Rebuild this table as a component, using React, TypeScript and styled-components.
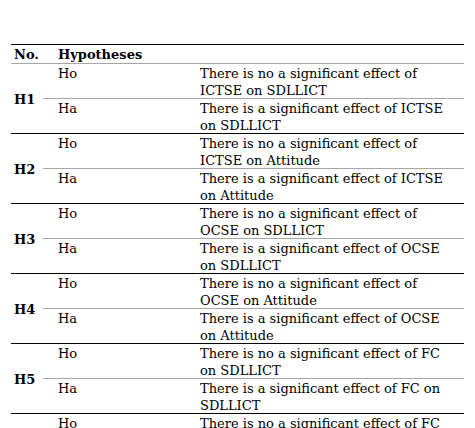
import React from 'react';
import styled, { createGlobalStyle } from 'styled-components';

interface Hypothesis {
  id: string;
  ho: string[];
  ha: string[];
}

const rows: Hypothesis[] = [
  { id: 'H1', ho: ['There is no a significant effect of', 'ICTSE on SDLLICT'], ha: ['There is a significant effect of ICTSE', 'on SDLLICT'] },
  { id: 'H2', ho: ['There is no a significant effect of', 'ICTSE on Attitude'], ha: ['There is a significant effect of ICTSE', 'on Attitude'] },
  { id: 'H3', ho: ['There is no a significant effect of', 'OCSE on SDLLICT'], ha: ['There is a significant effect of OCSE', 'on SDLLICT'] },
  { id: 'H4', ho: ['There is no a significant effect of', 'OCSE on Attitude'], ha: ['There is a significant effect of OCSE', 'on Attitude'] },
  { id: 'H5', ho: ['There is no a significant effect of FC', 'on SDLLICT'], ha: ['There is a significant effect of FC on', 'SDLLICT'] },
  { id: 'H6', ho: ['There is no a significant effect of FC', 'on Attitude'], ha: ['There is a significant effect of FC on', 'Attitude'] },
];

const GlobalStyle = createGlobalStyle`
  body {
    margin: 0;
    background: #ffffff;
    font-family: "DejaVu Serif", "Liberation Serif", serif;
    color: #000000;
  }
`;

const Page = styled.div`
  width: 475px;
  height: 428px;
  overflow: hidden;
  padding: 44px 0 0 11px;
  box-sizing: border-box;
`;

const Table = styled.table`
  width: 453px;
  border-collapse: collapse;
  table-layout: fixed;
  font-size: 13px;
  line-height: 17px;
  border-top: 1px solid #000;
`;

const HeadCell = styled.th<{ $pad: number }>`
  text-align: left;
  font-weight: bold;
  padding: 1px 0 0 ${(p) => p.$pad}px;
  height: 17px;
  box-sizing: border-box;
  border-bottom: 1px solid #a6a6a6;
  vertical-align: top;
`;

const IdCell = styled.td`
  font-weight: bold;
  padding: 1px 0 0 3px;
  vertical-align: middle;
  border-bottom: 1px solid #000;
`;

const Cell = styled.td<{ $pad: number; $last?: boolean }>`
  padding: 1px 0 0 ${(p) => p.$pad}px;
  vertical-align: top;
  white-space: nowrap;
  border-bottom: 1px solid ${(p) => (p.$last ? '#000' : '#a6a6a6')};
`;

// rows are 35px tall in the source; pull the 2-line block up by 1px
const CellText = styled.div`
  height: 33px;
  overflow: visible;
`;

function Lines({ lines }: { lines: string[] }) {
  return (
    <CellText>
      {lines.map((l, i) => (
        <React.Fragment key={i}>
          {i > 0 && <br />}
          {l}
        </React.Fragment>
      ))}
    </CellText>
  );
}

export default function App() {
  return (
    <>
      <GlobalStyle />
      <Page>
        <Table>
          <colgroup>
            <col style={{ width: 32 }} />
            <col style={{ width: 154 }} />
            <col style={{ width: 267 }} />
          </colgroup>
          <thead>
            <tr>
              <HeadCell $pad={3}>No.</HeadCell>
              <HeadCell $pad={15} colSpan={2}>Hypotheses</HeadCell>
            </tr>
          </thead>
          <tbody>
            {rows.map((r) => (
              <React.Fragment key={r.id}>
                <tr>
                  <IdCell rowSpan={2}>{r.id}</IdCell>
                  <Cell $pad={15}>Ho</Cell>
                  <Cell $pad={3}><Lines lines={r.ho} /></Cell>
                </tr>
                <tr>
                  <Cell $pad={15} $last>Ha</Cell>
                  <Cell $pad={3} $last><Lines lines={r.ha} /></Cell>
                </tr>
              </React.Fragment>
            ))}
          </tbody>
        </Table>
      </Page>
    </>
  );
}
